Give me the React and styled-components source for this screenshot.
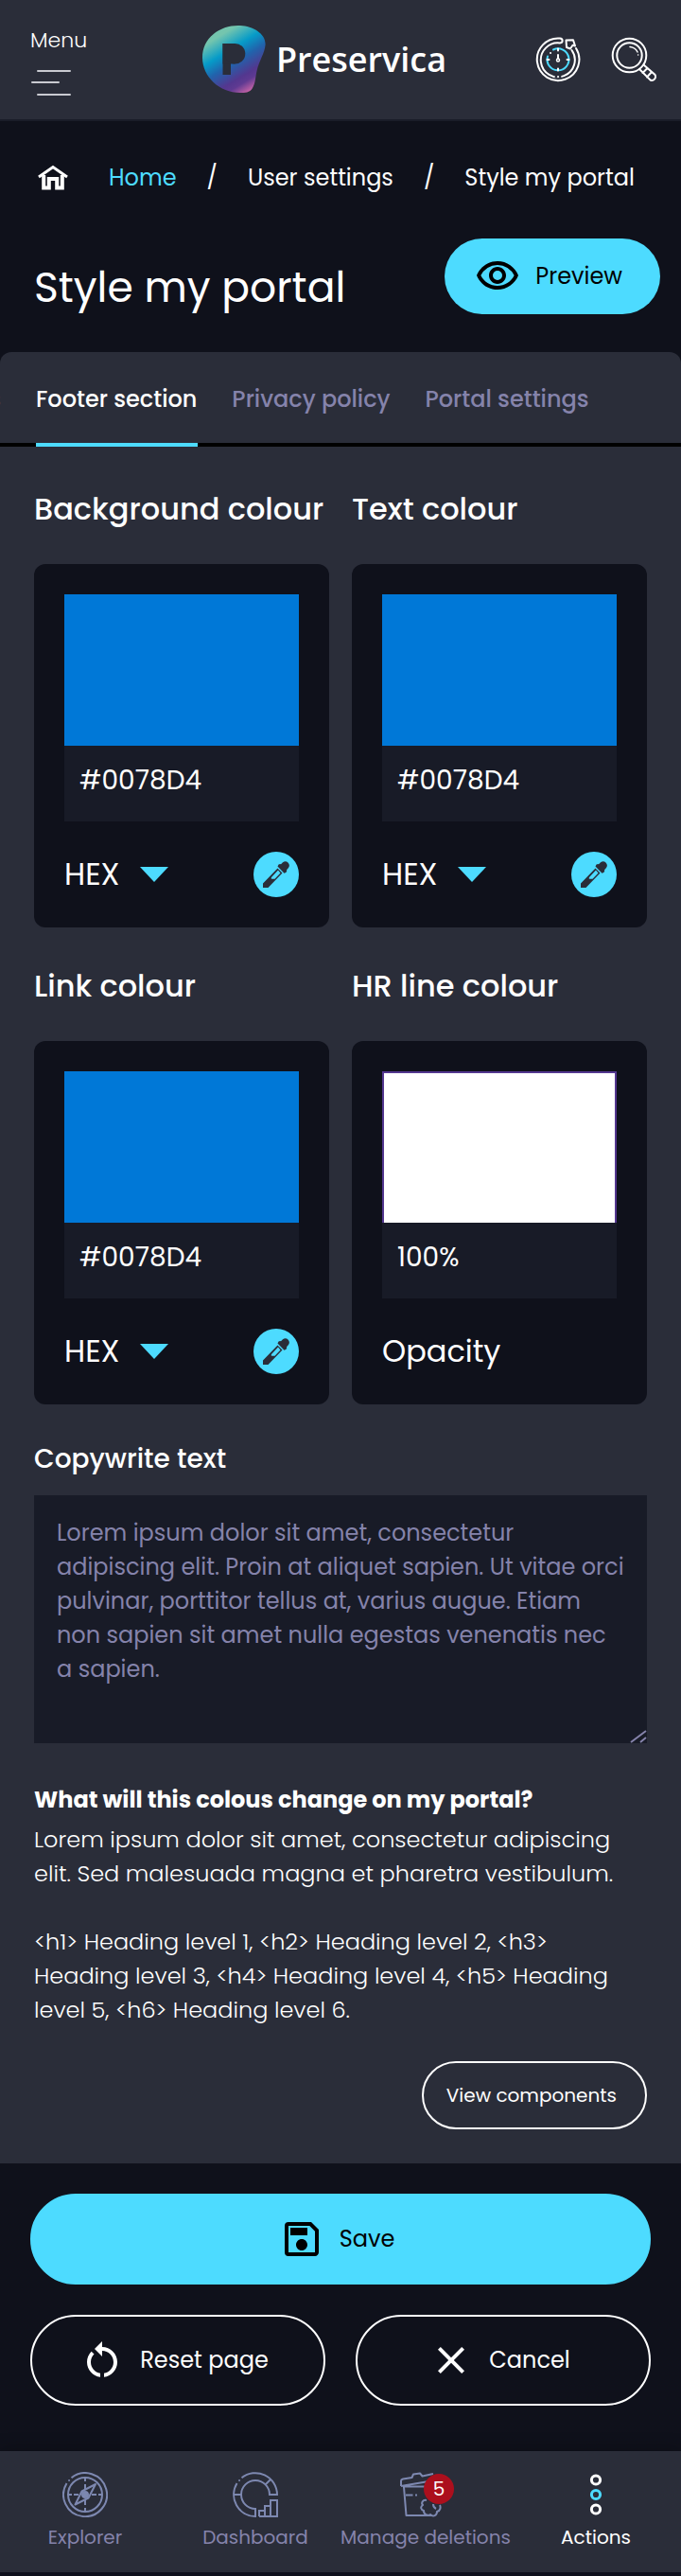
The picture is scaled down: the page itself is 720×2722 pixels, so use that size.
import { useState } from "react";
import styled, { createGlobalStyle } from "styled-components";
import {
    MdOutlineVisibility,
    MdOutlineSave,
    MdRestartAlt,
    MdClose
} from "react-icons/md";

const lorem = "Lorem ipsum dolor sit amet, consectetur adipiscing elit. Proin at aliquet sapien. Ut vitae orci pulvinar, porttitor tellus at, varius augue. Etiam non sapien sit amet nulla egestas venenatis nec a sapien.";

export default function App() {
    const [tab, setTab] = useState("Footer section");

    return (
        <>
            <GlobalStyle />
            <Header>
                <MenuButton>
                    Menu
                    <MenuIcon />
                </MenuButton>
                <Brand href="#">
                    <LogoIcon />
                    Preservica
                </Brand>
                <HeaderIcons>
                    <IconButton aria-label="History"><HistoryIcon /></IconButton>
                    <IconButton aria-label="Search"><SearchIcon /></IconButton>
                </HeaderIcons>
            </Header>

            <Breadcrumb aria-label="Breadcrumb">
                <HomeLink href="#" aria-label="Start"><HomeIcon /></HomeLink>
                <Crumb href="#" $active>Home</Crumb>
                <span>/</span>
                <Crumb href="#">User settings</Crumb>
                <span>/</span>
                <Crumb href="#">Style my portal</Crumb>
            </Breadcrumb>

            <TitleRow>
                <h1>Style my portal</h1>
                <PreviewButton>
                    <MdOutlineVisibility size={48} />
                    Preview
                </PreviewButton>
            </TitleRow>

            <Panel>
                <Tabs role="tablist">
                    <PreviousTab role="tab">Links</PreviousTab>
                    {["Footer section", "Privacy policy", "Portal settings"].map((name) => (
                        <Tab
                            key={name}
                            role="tab"
                            aria-selected={tab === name}
                            $active={tab === name}
                            onClick={() => setTab(name)}
                        >
                            {name}
                        </Tab>
                    ))}
                </Tabs>

                <Content>
                    <ColourGrid>
                        <ColourPicker title="Background colour" id="background" />
                        <ColourPicker title="Text colour" id="text" />
                        <ColourPicker title="Link colour" id="link" />
                        <ColourPicker title="HR line colour" id="hr" opacity />
                    </ColourGrid>

                    <FieldLabel htmlFor="copywrite">Copywrite text</FieldLabel>
                    <TextAreaBox>
                        <TextArea id="copywrite" defaultValue={lorem} spellCheck="false" />
                        <Grip viewBox="0 0 18 14">
                            <path d="M1 13 17 1M11 13l6-5" />
                        </Grip>
                    </TextAreaBox>

                    <Info>
                        <h3>What will this colous change on my portal?</h3>
                        <p>Lorem ipsum dolor sit amet, consectetur adipiscing elit. Sed malesuada magna et pharetra vestibulum.</p>
                        <p>&lt;h1&gt; Heading level 1, &lt;h2&gt; Heading level 2, &lt;h3&gt; Heading level 3, &lt;h4&gt; Heading level 4, &lt;h5&gt; Heading level 5, &lt;h6&gt; Heading level 6.</p>
                    </Info>
                    <ViewButton>View components</ViewButton>
                </Content>
            </Panel>

            <Actions>
                <ActionButton $primary>
                    <MdOutlineSave size={48} />
                    Save
                </ActionButton>
                <ActionButton>
                    <MdRestartAlt size={48} />
                    Reset page
                </ActionButton>
                <ActionButton>
                    <MdClose size={48} />
                    Cancel
                </ActionButton>
            </Actions>

            <BottomNav>
                <NavItem href="#"><CompassIcon />Explorer</NavItem>
                <NavItem href="#"><DashboardIcon />Dashboard</NavItem>
                <NavItem href="#">
                    <BadgeBox>
                        <BinIcon />
                        <Badge>5</Badge>
                    </BadgeBox>
                    Manage deletions
                </NavItem>
                <NavItem href="#" $active><DotsIcon />Actions</NavItem>
            </BottomNav>
        </>
    );
}

function ColourPicker({ title, id, opacity }) {
    return (
        <section>
            <H2>{title}</H2>
            <Card>
                <Swatch $white={opacity} />
                <ColourValue aria-label={title} defaultValue={opacity ? "100%" : "#0078D4"} />
                <CardFooter>
                    {opacity ? (
                        <span>Opacity</span>
                    ) : (
                        <>
                            <FormatLabel htmlFor={id}>
                                <FormatSelect id={id} aria-label={`${title} format`}>
                                    <option>HEX</option>
                                    <option>RGB</option>
                                </FormatSelect>
                                <svg width="30" height="16" viewBox="0 0 30 16">
                                    <path d="M0 0h30L15 16z" fill="#4ddbff" />
                                </svg>
                            </FormatLabel>
                            <DropperButton aria-label={`Pick ${title}`}>
                                <DropperIcon />
                            </DropperButton>
                        </>
                    )}
                </CardFooter>
            </Card>
        </section>
    );
}

function MenuIcon() {
    return (
        <svg width="44" height="28" viewBox="0 0 44 28" stroke="#c9cad1" strokeWidth="2" strokeLinecap="round">
            <path d="M8 2h34M2 14h28M8 27h34" />
        </svg>
    );
}

function LogoIcon() {
    return (
        <svg width="68" height="72" viewBox="0 0 68 72">
            <defs>
                <linearGradient id="logo" x1="12" y1="8" x2="50" y2="70" gradientUnits="userSpaceOnUse">
                    <stop offset="0.08" stopColor="#74c5ae" />
                    <stop offset="0.33" stopColor="#069bc8" />
                    <stop offset="0.52" stopColor="#2163ac" />
                    <stop offset="0.75" stopColor="#53378f" />
                    <stop offset="0.84" stopColor="#5f3a92" />
                    <stop offset="1" stopColor="#cb65a8" />
                </linearGradient>
            </defs>
            <path fill="url(#logo)" d="M38 0C52 0 67 8 66.600 20C66 29 60 37 57.500 48C56 55 56 61 53 66C50 71 45 71 40 71C18 71 0 54 0 34C0 13 18 0 38 0Z" />
            <g fill="#2a2d39">
                <rect x="21.500" y="19" width="8.500" height="33" />
                <rect x="21.500" y="19" width="13" height="21.500" />
                <circle cx="34.500" cy="29.700" r="10.800" />
            </g>
        </svg>
    );
}

function HistoryIcon() {
    return (
        <svg width="48" height="48" viewBox="0 0 48 48" fill="none" stroke="#fff" strokeWidth="2" strokeLinecap="round">
            <path d="M43 12A22.300 22.300 0 1 1 26 1.600C29.500 1.900 29.500 6.200 26 6.500A18 18 0 1 0 38.500 14" />
            <path d="M32.500 3.500 40 3.300 42 9.500 39.500 8.800 37 12.500 33 11Z" strokeLinejoin="round" />
            <path d="M19 13.500A11.500 11.500 0 1 1 13 20.500" stroke="#4ddbff" />
            <path d="M24 12.500v2M24 33.500v2M12.500 24h2M33.500 24h2M24 19v4" />
            <circle cx="24" cy="24.500" r="1.500" strokeWidth="1.500" />
            <path d="M22 42h4" stroke="#2a2d39" strokeWidth="3" />
            <path d="M24 42h.1M16 17h.1" />
        </svg>
    );
}

function SearchIcon() {
    return (
        <svg width="48" height="48" viewBox="0 0 48 48" fill="none" stroke="#fff" strokeWidth="2" strokeLinecap="round">
            <circle cx="19.500" cy="19.500" r="17.800" />
            <circle cx="19.500" cy="19.500" r="13.200" />
            <path d="M20 10.500C24 11 26.500 12.500 28 16M28.600 19h.1" strokeWidth="1.500" />
            <path d="M30 34 41.500 45.500A3.900 3.900 0 0 0 46.500 40L34.500 29.500M33.500 38 38.500 33M38 42.500 43 37" />
        </svg>
    );
}

function HomeIcon() {
    return (
        <svg width="34" height="28" viewBox="0 0 34 28" fill="none" stroke="#fff" strokeWidth="4">
            <path d="M2 13 17 2.500 32 13" strokeWidth="3" />
            <path d="M7.200 11v13.500h5.600v-9.500h8.400v9.500h5.600V11" />
        </svg>
    );
}

function DropperIcon() {
    return (
        <svg width="28" height="28" viewBox="0 0 28 28" fill="currentColor" fillRule="evenodd">
            <path d="M0 23.500 15.500 7.500 20.500 12.500 5.500 28H0ZM16 9.500 9 17q-1 1.800.5 1.800H12.500L18.500 12.500Z" />
            <path d="M15.500 5.500Q16.500 2.500 19 3.200L21 1.200Q24-1 26.500 1.500T27 7L25 9.200Q26 12 22.500 12.800Z" />
        </svg>
    );
}

function CompassIcon() {
    return (
        <svg width="48" height="48" viewBox="0 0 48 48" fill="none" stroke="#7d88b0" strokeWidth="2">
            <path d="M9.500 6.300A23 23 0 1 1 4.500 12M6.300 9h1.500" />
            <circle cx="24" cy="24" r="18" />
            <path d="M24 6v4M24 13v5M24 30v5M24 38v4M6 24h4M12 24h5M31 24h5M38 24h4" />
            <path d="M35 13 27.500 27.500 13.500 34.500 20.500 20.500Z" strokeLinejoin="round" />
            <circle cx="24" cy="24" r="3" fill="#7d88b0" />
        </svg>
    );
}

function DashboardIcon() {
    return (
        <svg width="48" height="48" viewBox="0 0 48 48" fill="none" stroke="#7d88b0" strokeWidth="2">
            <path d="M9.500 6.300A23 23 0 0 1 47 24h-8A15 15 0 1 0 24 39v8A23 23 0 0 1 4.500 12M6.300 9h1.500M1 24h8M35 13l5.500-5.500" />
            <path d="M28 47v-6h6v6M34 41v-5h6v11M40 36v-6h7v17H28" />
        </svg>
    );
}

function BinIcon() {
    return (
        <svg width="48" height="48" viewBox="0 0 48 48" fill="none" stroke="#7d88b0" strokeWidth="2" strokeLinejoin="round">
            <path d="M2 15V9.500Q2 8 4 7.500L13.500 6l1.500-3.500 7-1 2.500 3L36 2M2 15 40 8.500M4 15.500h38M5 16l2.500 30h27M7 24.500h7.500M17 24.500h2" />
            <path d="M29 30c-4-1-6 3-4 5-3 2-2 5 1 6 0 4 4 6 7 4 3 3 7 1 7-3 4-1 4-5 3-7" />
            <path d="M36 34c0 3 1 4 3 5" />
        </svg>
    );
}

function DotsIcon() {
    return (
        <svg width="48" height="48" viewBox="0 0 48 48" fill="none" stroke="#fff" strokeWidth="3">
            <circle cx="24" cy="8.500" r="4.600" />
            <circle cx="24" cy="24" r="4.600" stroke="#4ddbff" />
            <circle cx="24" cy="39.500" r="4.600" />
        </svg>
    );
}

const GlobalStyle = createGlobalStyle`
    * {
        box-sizing: border-box;
        margin: 0;
        padding: 0;
    }

    body {
        background-color: #0f111b;
        color: #ffffff;
        font-family: Poppins, Inter, sans-serif;
        font-size: 24px;
        line-height: 36px;
    }

    button, input, select, textarea {
        font: inherit;
        color: inherit;
        background: none;
        border: none;
        outline: none;
    }

    button {
        cursor: pointer;
    }

    a {
        color: inherit;
        text-decoration: none;
    }

    svg {
        display: block;
        flex-shrink: 0;
    }
`

const Header = styled.header`
    height: 128px;
    padding: 0 26px 0 32px;

    display: flex;
    justify-content: space-between;
    align-items: center;

    background-color: #2a2d39;
    border-bottom: 2px solid #1a1d29;
`

const MenuButton = styled.button`
    width: 88px;

    display: flex;
    flex-direction: column;
    gap: 12px;

    text-align: left;
    font-size: 22px;
    font-weight: 300;
`

const Brand = styled.a`
    display: flex;
    align-items: center;
    gap: 10px;

    font-family: "Open Sans", sans-serif;
    font-size: 36px;
    font-weight: 600;
`

const HeaderIcons = styled.div`
    display: flex;
    gap: 32px;
`

const IconButton = styled.button`
    width: 48px;
    height: 48px;
`

const Breadcrumb = styled.nav`
    padding: 42px 39px 26px;

    display: flex;
    align-items: center;
    gap: 32px;

    white-space: nowrap;
`

const HomeLink = styled.a`
    margin-right: 10px;
`

const Crumb = styled.a`
    color: ${(props) => (props.$active ? "#4ddbff" : "#ffffff")};
`

const TitleRow = styled.div`
    padding: 20px 22px 40px 36px;

    display: flex;
    justify-content: space-between;
    align-items: center;

    h1 {
        padding-top: 24px;
        font-size: 44px;
        font-weight: 400;
        line-height: 56px;
    }
`

const PreviewButton = styled.button`
    height: 80px;
    padding: 0 40px 0 32px;

    display: flex;
    align-items: center;
    gap: 16px;

    border-radius: 40px;
    background-color: #4ddbff;
    color: #000000;
`

const Panel = styled.main`
    background-color: #2a2d39;
    border-radius: 12px 12px 0 0;
    overflow: hidden;
`

const Tabs = styled.div`
    height: 100px;

    display: flex;
    gap: 36px;

    box-shadow: inset 0 -4px #000000;
`

const Tab = styled.button`
    padding: 4px 1px 0 0;

    font-weight: 500;
    white-space: nowrap;
    color: ${(props) => (props.$active ? "#ffffff" : "#8583ab")};
    border-bottom: 4px solid ${(props) => (props.$active ? "#4ddbff" : "transparent")};
`

/* scrolled out of view on the left */
const PreviousTab = styled(Tab)`
    width: 2px;

    display: flex;
    justify-content: flex-end;
    align-items: center;
    overflow: hidden;
`

const Content = styled.div`
    padding: 42px 36px 36px;
`

const ColourGrid = styled.div`
    display: grid;
    grid-template-columns: 1fr 1fr;
    gap: 38px 24px;
`

const H2 = styled.h2`
    margin-bottom: 34px;

    font-size: 32px;
    font-weight: 500;
    line-height: 48px;
    white-space: nowrap;
`

const Card = styled.div`
    padding: 32px;

    background-color: #0f111b;
    border-radius: 12px;
`

const Swatch = styled.div`
    height: 160px;
    background-color: ${(props) => (props.$white ? "#ffffff" : "#0078d7")};
    border: ${(props) => (props.$white ? "2px solid #53378f" : "none")};
    border-bottom: none;
`

const ColourValue = styled.input`
    display: block;
    width: 100%;
    height: 80px;
    padding: 0 16px 6px;

    background-color: #181b27;
    font-size: 28px;
`

const CardFooter = styled.div`
    height: 48px;
    margin-top: 32px;

    display: flex;
    justify-content: space-between;
    align-items: center;

    font-size: 32px;
    line-height: 48px;
`

const FormatLabel = styled.label`
    display: flex;
    align-items: center;
    gap: 16px;
`

const FormatSelect = styled.select`
    appearance: none;
    height: 48px;
`

const DropperButton = styled.button`
    width: 48px;
    height: 48px;

    display: flex;
    justify-content: center;
    align-items: center;

    border-radius: 50%;
    background-color: #4ddbff;
    color: #2a2d39;
`

const FieldLabel = styled.label`
    display: block;
    margin: 36px 0 16px;

    font-size: 28px;
    font-weight: 500;
    line-height: 44px;
`

const TextAreaBox = styled.div`
    position: relative;
`

const TextArea = styled.textarea`
    display: block;
    width: 100%;
    height: 262px;
    padding: 22px 24px;

    background-color: #181b27;
    color: #8583ab;
    resize: none;
`

const Grip = styled.svg`
    width: 18px;
    height: 14px;

    position: absolute;
    right: 0;
    bottom: 0;

    stroke: #8583ab;
    stroke-width: 2;
`

const Info = styled.div`
    margin: 42px 0 36px;

    h3 {
        margin-bottom: 6px;
        font-size: 24px;
        font-weight: 700;
    }

    p {
        font-weight: 300;
    }

    p + p {
        margin-top: 36px;
    }
`

const ViewButton = styled.button`
    display: block;
    height: 72px;
    margin-left: auto;
    padding: 0 30px 0 24px;

    border: 2px solid #ffffff;
    border-radius: 36px;
    font-size: 20px;
`

const Actions = styled.div`
    padding: 32px 32px 48px;

    display: grid;
    grid-template-columns: 1fr 1fr;
    gap: 32px;
`

const ActionButton = styled.button`
    height: 96px;
    padding-right: 8px;
    grid-column: ${(props) => (props.$primary ? "1 / -1" : "auto")};

    display: flex;
    justify-content: center;
    align-items: center;
    gap: 16px;

    border: 2px solid ${(props) => (props.$primary ? "#4ddbff" : "#ffffff")};
    border-radius: 48px;
    background-color: ${(props) => (props.$primary ? "#4ddbff" : "transparent")};
    color: ${(props) => (props.$primary ? "#000000" : "#ffffff")};
`

const BottomNav = styled.nav`
    height: 132px;
    padding-top: 22px;

    display: grid;
    grid-template-columns: repeat(4, 1fr);

    background-color: #2a2d39;
    border-bottom: 4px solid #10111e;
    box-shadow: 0 -2px 16px rgba(0, 0, 0, 0.25);
`

const NavItem = styled.a`
    display: flex;
    flex-direction: column;
    align-items: center;
    gap: 6px;

    font-size: 20px;
    line-height: 30px;
    white-space: nowrap;
    color: ${(props) => (props.$active ? "#ffffff" : "#8583ab")};
`

const BadgeBox = styled.div`
    margin-right: 8px;
    position: relative;
`

const Badge = styled.span`
    width: 32px;
    height: 32px;

    display: flex;
    justify-content: center;
    align-items: center;

    position: absolute;
    top: 2px;
    right: -10px;

    border-radius: 50%;
    background-color: #ac0f1d;
    color: #ffffff;
`
